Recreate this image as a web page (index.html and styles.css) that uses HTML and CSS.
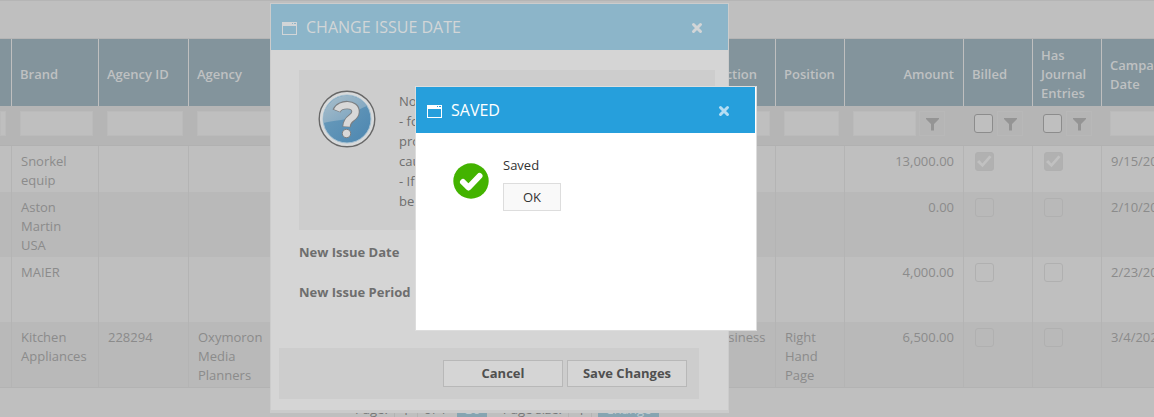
FILE: index.html
```html
<!DOCTYPE html>
<html lang="en">
<head>
<meta charset="utf-8">
<title>Campaign lines</title>
<link rel="stylesheet" href="styles.css">
</head>
<body>
<svg width="0" height="0" class="defs" aria-hidden="true">
  <symbol id="funnel" viewBox="0 0 13 13"><path d="M0 0h13v1L8 6v6.500H5V6L0 1z"/></symbol>
  <symbol id="window" viewBox="0 0 15 13"><path fill-rule="evenodd" d="M0 0h15v13H0zM1 4v8h13V4zM10 1v1h1V1zM12 1v1h2V1z"/></symbol>
  <symbol id="close" viewBox="0 0 12 12"><path d="M2.500 2.500l7 7M9.500 2.500l-7 7" stroke="currentColor" stroke-width="3" stroke-linecap="round"/></symbol>
</svg>

<main class="page">
  <div class="toolbar"></div>
  <div class="grid">
    <table class="lines">
      <colgroup>
        <col class="c-edge"><col class="c-brand"><col class="c-agid"><col class="c-agency"><col class="c-gap"><col class="c-section">
        <col class="c-small"><col class="c-amount"><col class="c-small"><col class="c-small"><col class="c-date">
      </colgroup>
      <thead>
        <tr>
          <th></th><th>Brand</th><th>Agency ID</th><th>Agency</th><th></th><th>Section</th><th>Position</th>
          <th class="num">Amount</th><th>Billed</th><th>Has Journal Entries</th><th>Campaign Date</th>
        </tr>
        <tr class="filters">
          <td><div class="filter"><input type="text" aria-label="Filter"></div></td>
          <td><div class="filter"><input type="text" aria-label="Filter brand"></div></td>
          <td><div class="filter"><input type="text" aria-label="Filter agency ID"></div></td>
          <td><div class="filter"><input type="text" aria-label="Filter agency"></div></td>
          <td></td>
          <td><div class="filter"><input type="text" aria-label="Filter section"></div></td>
          <td><div class="filter"><input type="text" aria-label="Filter position"></div></td>
          <td><div class="filter amount"><input type="text" aria-label="Filter amount"><button type="button" aria-label="Amount filter menu"><svg><use href="#funnel"/></svg></button></div></td>
          <td><div class="filter tick"><input type="checkbox" aria-label="Filter billed"><button type="button" aria-label="Billed filter menu"><svg><use href="#funnel"/></svg></button></div></td>
          <td><div class="filter tick"><input type="checkbox" aria-label="Filter journal entries"><button type="button" aria-label="Journal filter menu"><svg><use href="#funnel"/></svg></button></div></td>
          <td><div class="filter"><input type="text" aria-label="Filter campaign date"></div></td>
        </tr>
      </thead>
      <tbody>
        <tr>
          <td></td><td>Snorkel equip</td><td></td><td></td><td></td><td></td><td></td><td class="num">13,000.00</td>
          <td><input type="checkbox" checked disabled aria-label="Billed"></td><td><input type="checkbox" checked disabled aria-label="Has journal entries"></td><td>9/15/2020</td>
        </tr>
        <tr class="tall">
          <td></td><td>Aston Martin USA</td><td></td><td></td><td></td><td></td><td></td><td class="num">0.00</td>
          <td><input type="checkbox" disabled aria-label="Billed"></td><td><input type="checkbox" disabled aria-label="Has journal entries"></td><td>2/10/2020</td>
        </tr>
        <tr class="tall">
          <td></td><td>MAIER</td><td></td><td></td><td></td><td></td><td></td><td class="num">4,000.00</td>
          <td><input type="checkbox" disabled aria-label="Billed"></td><td><input type="checkbox" disabled aria-label="Has journal entries"></td><td>2/23/2020</td>
        </tr>
        <tr class="tall">
          <td></td><td>Kitchen Appliances</td><td>228294</td><td>Oxymoron Media Planners</td><td></td><td>Business</td><td>Right Hand Page</td><td class="num">6,500.00</td>
          <td><input type="checkbox" disabled aria-label="Billed"></td><td><input type="checkbox" disabled aria-label="Has journal entries"></td><td>3/4/2020</td>
        </tr>
      </tbody>
    </table>
  </div>
  <div class="pager">
    <label for="pg">Page:</label><input id="pg" type="text" value="1"><span>of 1</span><button type="button">Go</button>
    <label for="ps" class="size">Page size:</label><input id="ps" type="text" value="4"><button type="button" class="wide">Change</button>
  </div>
</main>

<section class="dialog change" role="dialog" aria-labelledby="t1">
  <header class="bar">
    <svg class="win"><use href="#window"/></svg>
    <h2 id="t1">CHANGE ISSUE DATE</h2>
    <button type="button" class="x" aria-label="Close"><svg><use href="#close"/></svg></button>
  </header>
  <div class="content">
    <div class="note">
      <svg class="help" viewBox="0 0 58 58">
        <defs>
          <linearGradient id="ball" x1="0" y1="0" x2="1" y2="1"><stop offset="0" stop-color="#6f9fbd"/><stop offset="1" stop-color="#4c86b0"/></linearGradient>
          <linearGradient id="gloss" x1="0" y1="0" x2="1" y2="1"><stop offset="0" stop-color="#aabfcb"/><stop offset="1" stop-color="#739fbe"/></linearGradient>
        </defs>
        <circle cx="29" cy="29" r="27.800" fill="#d8dadb" stroke="#686868" stroke-width="1.400"/>
        <circle cx="29" cy="29" r="24" fill="url(#ball)" stroke="#a9c3d3"/>
        <path d="M5.500 33A24 24 0 0 1 49 16C38 19 34 29 23 30 15 31 9 32 5.500 33z" fill="url(#gloss)"/>
        <g fill="none" stroke-linejoin="round">
          <path d="M18.500 21c3-8 20-8 19 1-.5 7-8.500 5-9 15" stroke="#7c7f82" stroke-width="8.500"/>
          <path d="M19 20.500c3-7 19-7.500 18.500 1.500-.5 7-8.500 5-9 14.500" stroke="#d8d8d8" stroke-width="6.500"/>
        </g>
        <circle cx="28.500" cy="43.500" r="4.200" fill="#d8d8d8" stroke="#7c7f82"/>
      </svg>
      <p>Note:<br>- for<br>proc<br>caus<br>- If<br>be</p>
    </div>
    <p class="field">New Issue Date</p>
    <p class="field">New Issue Period</p>
  </div>
  <footer class="actions"><button type="button">Cancel</button><button type="button">Save Changes</button></footer>
</section>

<section class="dialog saved" role="alertdialog" aria-labelledby="t2">
  <header class="bar">
    <svg class="win"><use href="#window"/></svg>
    <h2 id="t2">SAVED</h2>
    <button type="button" class="x" aria-label="Close"><svg><use href="#close"/></svg></button>
  </header>
  <div class="message">
    <svg class="ok-icon" viewBox="0 0 36 36"><circle cx="18" cy="18" r="17.700" fill="#43b300"/><path d="M10 19l5.500 5.500L26.500 13" fill="none" stroke="#fff" stroke-width="6" stroke-linecap="round" stroke-linejoin="round"/></svg>
    <div class="reply"><p>Saved</p><button type="button">OK</button></div>
  </div>
</section>
</body>
</html>
```
FILE: styles.css
```css
* { box-sizing: border-box; }
html, body { height: 100%; }
body {
  margin: 0;
  overflow: hidden;
  position: relative;
  background: #bfbfbf;
  color: #8b8b8b;
  font: 13px/19px "Open Sans", "Noto Sans", sans-serif;
}
h2, p { margin: 0; }
button, input { font: inherit; color: inherit; margin: 0; padding: 0; border: 0; border-radius: 0; }
.defs { position: absolute; }

.toolbar { height: 39px; border-top: 1px solid #b5b5b5; border-bottom: 1px solid #b5b5b5; }
.grid { overflow: hidden; border-bottom: 1px solid #b3b3b3; }

.lines { table-layout: fixed; width: 100%; min-width: 1184px; border-collapse: separate; border-spacing: 0; }
.c-edge { width: 12px; }
.c-brand { width: 87px; }
.c-agid { width: 90px; }
.c-agency { width: 91px; }
.c-gap { width: 423px; }
.c-section { width: 73px; }
.c-small { width: 69px; }
.c-amount { width: 119px; }
.lines th {
  height: 67px;
  padding: 4px 8px 0 8px;
  background: #83949c;
  color: #bfc1c2;
  border-right: 1px solid #bfbfbf;
  font-weight: 600;
  text-align: left;
  vertical-align: middle;
}
.lines tbody td { height: 46px; padding: 6px 8px 2px 9px; border-right: 1px solid #b4b4b4; vertical-align: top; }
.lines tbody td:nth-child(2) { padding-right: 10px; }
.lines .tall td { height: 65px; }
.lines tbody tr:nth-child(even) { background: #b9b9b9; }
.lines tbody td.num, .lines th.num { text-align: right; padding-right: 9px; }
.lines th:first-child, .lines td:first-child { padding-left: 0; padding-right: 0; }
.filters td { height: 40px; padding: 5px 6px 0 8px; background: #b5b5b5; border-bottom: 1px solid #b1b1b1; vertical-align: top; }
.lines .filters td:first-child { padding-right: 6px; }
.filter { display: flex; gap: 3px; align-items: center; }
.filter input[type=text] { flex: 1; min-width: 0; height: 25px; background: #bfbfbf; border: 1px solid #bbb; }
.filter.amount { padding-right: 13px; }
.filter button { width: 26px; height: 25px; padding-top: 2px; background: #b5b5b5; border: 1px solid #b8b8b8; display: grid; place-items: center; }
.filter svg { width: 13px; height: 13px; fill: #949494; }
.filter.tick { padding-left: 2px; gap: 4px; }

input[type=checkbox] { appearance: none; width: 19px; height: 19px; border: 1px solid #8c8c8c; border-radius: 3px; background: #bfbfbf; display: grid; place-items: center; }
input[type=checkbox]:disabled { margin-left: 2px; border-color: #b0b0b0; background: transparent; }
input[type=checkbox]:checked { background: #b1b1b1; }
input[type=checkbox]:checked::before { content: ""; width: 15px; height: 13px; background: #c1c1c1; clip-path: polygon(0 53%, 15% 38%, 36% 65%, 82% 4%, 97% 15%, 37% 94%); }

.pager { display: flex; align-items: center; gap: 6px; height: 27px; margin-top: 8px; padding-left: 355px; color: #777; }
.pager input { width: 24px; height: 22px; background: #bfbfbf; border: 1px solid #b3b3b3; text-align: center; }
.pager button { width: 30px; height: 22px; margin-left: 4px; background: #86a4b1; color: #bfcbd0; }
.pager .size { margin-left: 10px; }
.pager .wide { width: 61px; margin-left: 0; }

.dialog { position: absolute; border: 1px solid #ccc; }
.bar { display: flex; align-items: center; height: 46px; padding: 0 24px 0 11px; }
.bar h2 { flex: 1; font-size: 16px; line-height: 22px; font-weight: 400; }
.win { width: 15px; height: 13px; margin-top: 2px; margin-right: 9px; fill: currentColor; }
.x { width: 14px; height: 14px; margin-top: 2px; display: grid; place-items: center; background: none; }
.x svg { width: 12px; height: 12px; }

.change { left: 270px; top: 3px; width: 459px; background: #d5d5d5; border-bottom: 3px solid #cbcbcb; color: #6e6e6e; }
.change .bar { background: #8cb5c9; color: #d2d5d7; }
.content { display: grid; gap: 20px; padding: 20px 13px 46px 28px; line-height: 20px; }
.note { display: flex; gap: 23px; height: 160px; padding: 20px 19px; background: #cdcdcd; margin-bottom: -8px; }
.help { width: 58px; height: 58px; }
.note p { padding-top: 1px; }
.field { font-weight: 700; }
.actions { display: flex; justify-content: flex-end; gap: 4px; margin: 0 29px 11px 8px; padding: 12px; background: #cdcdcd; }
.actions button { width: 120px; height: 27px; background: #d5d5d5; border: 1px solid #b8b8b8; color: #505050; font-weight: 700; }

.saved { left: 415px; top: 86px; width: 342px; height: 245px; background: #fff; border-color: #ddd; color: #333; }
.saved .bar { background: #269fdc; color: #fff; margin-right: 1px; }
.saved .x { color: #b5ddf3; }
.message { display: flex; gap: 14px; padding: 23px 37px; }
.ok-icon { width: 36px; height: 36px; margin-top: 7px; }
.reply { display: grid; gap: 8px; justify-items: start; align-content: start; }
.reply button { width: 58px; height: 28px; background: #f9f9f9; border: 1px solid #ddd; }
```
